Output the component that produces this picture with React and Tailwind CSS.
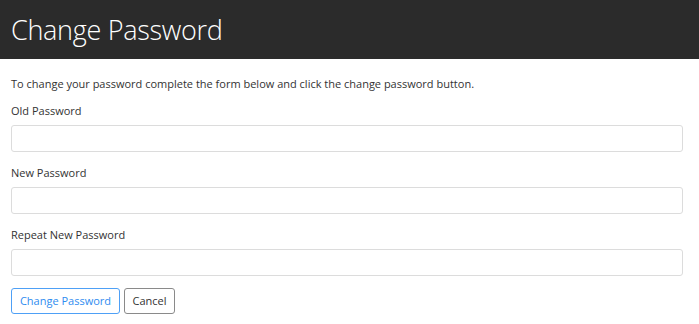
import React from "react";

const fields = ["Old Password", "New Password", "Repeat New Password"];

const App = () => {
    return (
        <div className="w-[699px] h-[324px] bg-white font-['Open_Sans',sans-serif] text-[#212529]">
            <header className="h-[59px] bg-[#2b2b2b] px-[11px] flex items-center">
                <h1 className="text-[27px] font-light text-white leading-none tracking-[-0.3px]">
                    Change Password
                </h1>
            </header>
            <div className="px-[11px] pt-[17px]">
                <p className="text-[11px] leading-[16px] text-[#333]">
                    To change your password complete the form below and click the change password button.
                </p>
                {/* form fields */}
                {fields.map((label, i) => (
                    <div key={label} className={i === 0 ? "mt-[11px]" : "mt-[13px]"}>
                        <label className="block text-[11px] leading-[16px] text-[#333]">{label}</label>
                        <input
                            type="password"
                            className="mt-[6px] block w-[672px] h-[27px] border border-[#dcdcdc] rounded-[3px] outline-none"
                        />
                    </div>
                ))}
                <div className="flex gap-[4px] mt-[12px]">
                    <button className="h-[26px] w-[109px] border border-[#4ea0f6] rounded-[3px] text-[11px] text-[#2f8cf0]">
                        Change Password
                    </button>
                    <button className="h-[26px] w-[51px] border border-[#8a8a8a] rounded-[3px] text-[11px] text-[#333]">
                        Cancel
                    </button>
                </div>
            </div>
        </div>
    );
};

export default App;
